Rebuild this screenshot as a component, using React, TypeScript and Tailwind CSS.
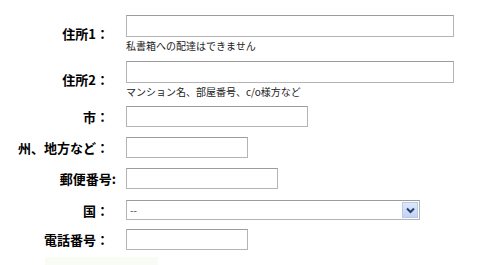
import React from "react";

const font = { fontFamily: '"Noto Sans CJK JP", "Noto Sans", sans-serif' };

function Label({ text, extra = "" }: { text: string; extra?: string }) {
  return (
    <div className={`w-[116px] shrink-0 text-right text-[13px] font-bold text-black leading-none ${extra}`}>
      {text}
    </div>
  );
}

const inputCls = "h-[21px] border border-[#b4b4b4] border-t-[#9c9c9c] bg-white";

export default function App() {
  return (
    <div className="w-[483px] h-[265px] bg-white overflow-hidden relative" style={font}>
      <div className="flex flex-col pt-[15px]">
        {/* Row 1 */}
        <div className="flex items-center">
          <Label text="住所1：" extra="pr-[7px]" />
          <div className="ml-[10px] flex flex-col">
            <div className={`${inputCls} w-[328px] h-[22px]`} />
            <div className="mt-[3px] text-[10px] leading-[12px] text-[#222]">私書箱への配達はできません</div>
          </div>
        </div>
        {/* Row 2 */}
        <div className="flex items-center mt-[9px]">
          <Label text="住所2：" extra="pr-[7px]" />
          <div className="ml-[10px] flex flex-col">
            <div className={`${inputCls} w-[328px] h-[22px]`} />
            <div className="mt-[3px] text-[10px] leading-[12px] text-[#222]">マンション名、部屋番号、c/o様方など</div>
          </div>
        </div>
        {/* 市 */}
        <div className="flex items-center mt-[8px]">
          <Label text="市：" extra="pr-[7px]" />
          <div className={`ml-[10px] ${inputCls} w-[182px]`} />
        </div>
        {/* 州 */}
        <div className="flex items-center mt-[10px]">
          <Label text="州、地方など：" extra="pr-[7px]" />
          <div className={`ml-[10px] ${inputCls} w-[122px]`} />
        </div>
        {/* 郵便番号 */}
        <div className="flex items-center mt-[10px]">
          <Label text="郵便番号:" />
          <div className={`ml-[10px] ${inputCls} w-[152px]`} />
        </div>
        {/* 国 */}
        <div className="flex items-center mt-[11px]">
          <Label text="国：" extra="pr-[7px]" />
          <div className="ml-[10px] h-[20px] w-[294px] border border-[#b4b4b4] border-t-[#9c9c9c] bg-white flex items-center justify-between pl-[3px] pr-[1px]">
            <span className="text-[10px] leading-none text-[#444]">--</span>
            <div className="h-[16px] w-[16px] border border-[#b9c9ea] bg-gradient-to-b from-[#dde7fb] to-[#c3d3f3] flex items-center justify-center">
              <svg width="9" height="7" viewBox="0 0 9 7">
                <path d="M1 1.5 L4.5 5 L8 1.5" stroke="#2b3f6e" strokeWidth="2" fill="none" />
              </svg>
            </div>
          </div>
        </div>
        {/* 電話番号 */}
        <div className="flex items-center mt-[9px]">
          <Label text="電話番号：" extra="pr-[7px]" />
          <div className={`ml-[10px] ${inputCls} w-[122px]`} />
        </div>
        <div className="mt-[7px] ml-[45px] h-[10px] w-[113px] bg-[#f8fcf4]" />
      </div>
    </div>
  );
}
